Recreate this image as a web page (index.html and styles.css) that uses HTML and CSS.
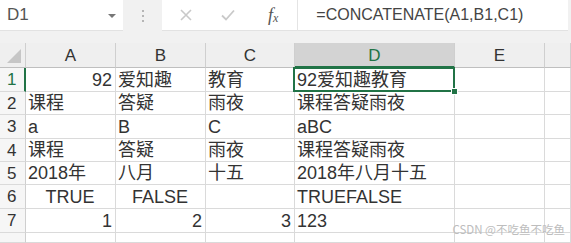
FILE: index.html
```html
<!doctype html>
<html>
  <head>
    <meta charset="utf-8" />
    <title>CONCATENATE</title>
    <link rel="stylesheet" href="styles.css">
  </head>
  <body>
    <div class="toolbar">
      <div class="namebox">
        <span class="name">D1</span>
        <span class="arrow"></span>
      </div>
      <div class="grip"><i></i><i></i><i></i></div>
      <div class="formula">
        <svg class="btn cancel" width="16" height="16" viewBox="0 0 16 16"><path d="M3 3 L13 13 M13 3 L3 13" stroke="#c9c9c9" stroke-width="1.6" fill="none"/></svg>
        <svg class="btn enter" width="16" height="16" viewBox="0 0 16 16"><path d="M2 8.5 L6 12.5 L14 3.5" stroke="#c9c9c9" stroke-width="1.8" fill="none"/></svg>
        <span class="fx">f<sub>x</sub></span>
        <span class="divider"></span>
        <span class="text">=CONCATENATE(A1,B1,C1)</span>
      </div>
    </div>

    <div class="sheet">
      <div class="corner"><span class="tri"></span></div>
      <div class="colhead">A</div>
      <div class="colhead">B</div>
      <div class="colhead">C</div>
      <div class="colhead active">D</div>
      <div class="colhead">E</div>
      <div class="colhead"></div>

      <div class="rowhead active">1</div>
      <div class="cell num">92</div>
      <div class="cell">爱知趣</div>
      <div class="cell">教育</div>
      <div class="cell selected">92爱知趣教育<span class="handle"></span></div>
      <div class="cell"></div>
      <div class="cell"></div>

      <div class="rowhead">2</div>
      <div class="cell">课程</div>
      <div class="cell">答疑</div>
      <div class="cell">雨夜</div>
      <div class="cell">课程答疑雨夜</div>
      <div class="cell"></div>
      <div class="cell"></div>

      <div class="rowhead">3</div>
      <div class="cell">a</div>
      <div class="cell">B</div>
      <div class="cell">C</div>
      <div class="cell">aBC</div>
      <div class="cell"></div>
      <div class="cell"></div>

      <div class="rowhead">4</div>
      <div class="cell">课程</div>
      <div class="cell">答疑</div>
      <div class="cell">雨夜</div>
      <div class="cell">课程答疑雨夜</div>
      <div class="cell"></div>
      <div class="cell"></div>

      <div class="rowhead">5</div>
      <div class="cell">2018年</div>
      <div class="cell">八月</div>
      <div class="cell">十五</div>
      <div class="cell">2018年八月十五</div>
      <div class="cell"></div>
      <div class="cell"></div>

      <div class="rowhead">6</div>
      <div class="cell bool">TRUE</div>
      <div class="cell bool">FALSE</div>
      <div class="cell"></div>
      <div class="cell">TRUEFALSE</div>
      <div class="cell"></div>
      <div class="cell"></div>

      <div class="rowhead">7</div>
      <div class="cell num">1</div>
      <div class="cell num">2</div>
      <div class="cell num">3</div>
      <div class="cell">123</div>
      <div class="cell"></div>
      <div class="cell"></div>

      <div class="rowhead"></div>
      <div class="cell"></div>
      <div class="cell"></div>
      <div class="cell"></div>
      <div class="cell"></div>
      <div class="cell"></div>
      <div class="cell"></div>
    </div>

    <div class="watermark">CSDN @不吃鱼不吃鱼</div>
  </body>
</html>
```

FILE: styles.css
```css
html,
body {
  margin: 0;
  width: 571px;
  height: 243px;
  overflow: hidden;
  background: #f1f1f1;
  color: #333;
  font-family: 'Liberation Sans', 'Noto Sans CJK SC', sans-serif;
}

body {
  position: relative;
}

/* formula bar */
.toolbar {
  display: flex;
  height: 31px;
  margin-bottom: 12px;
}

.namebox {
  width: 123px;
  background: #fff;
  display: flex;
  align-items: center;
  justify-content: space-between;
  padding: 0 7px 0 7px;
  box-sizing: border-box;
  border-bottom: 1px solid #e2e2e2;
}

.namebox .name {
  font-size: 17px;
  color: #555;
}

.namebox .arrow {
  width: 0;
  height: 0;
  border-left: 4px solid transparent;
  border-right: 4px solid transparent;
  border-top: 4px solid #777;
  margin-top: 1px;
}

.grip {
  width: 39px;
  display: flex;
  flex-direction: column;
  align-items: center;
  justify-content: center;
  gap: 3px;
}

.grip i {
  width: 2px;
  height: 2px;
  background: #b5b5b5;
}

.formula {
  width: 406px;
  background: #fff;
  display: flex;
  align-items: center;
  border-bottom: 1px solid #e2e2e2;
  box-sizing: border-box;
}

.formula .cancel {
  margin-left: 16px;
}

.formula .enter {
  margin-left: 26px;
}

.formula .fx {
  font-family: 'Liberation Serif', serif;
  font-style: italic;
  font-size: 18px;
  color: #555;
  margin-left: 32px;
}

.formula .fx sub {
  font-size: 12px;
  vertical-align: -1px;
}

.formula .divider {
  width: 1px;
  height: 31px;
  background: #e4e4e4;
  margin-left: 19px;
}

.formula .text {
  margin-left: 18px;
  font-size: 16px;
  color: #444;
}

/* sheet grid */
.sheet {
  display: grid;
  grid-template-columns: 26px 90px 90px 89px 160px 90px 1fr;
  grid-template-rows: 25px 24px 23px 24px 23px 23px 24px 24px 1fr;
  background: #fff;
  height: 200px;
  font-size: 18px;
}

.sheet > div {
  box-sizing: border-box;
  border-right: 1px solid #dadada;
  border-bottom: 1px solid #dadada;
  white-space: nowrap;
  overflow: visible;
}

.corner {
  background: #efefef;
  position: relative;
  border-right-color: #cfcfcf !important;
  border-bottom-color: #bfbfbf !important;
}

.corner .tri {
  position: absolute;
  right: 4px;
  bottom: 4px;
  width: 0;
  height: 0;
  border-left: 14px solid transparent;
  border-bottom: 14px solid #c6c6c6;
}

.colhead {
  background: #efefef;
  border-right-color: #cfcfcf !important;
  border-bottom-color: #bfbfbf !important;
  text-align: center;
  font-size: 17px;
  line-height: 26px;
  color: #333;
}

.colhead.active {
  background: #d3d3d3;
  color: #217346;
  border-bottom: 2px solid #217346 !important;
}

.rowhead {
  background: #f6f6f6;
  border-right-color: #cfcfcf !important;
  font-size: 17px;
  padding-left: 7px;
  line-height: 23px;
  color: #333;
}

.rowhead.active {
  color: #217346;
  border-right: 2px solid #217346 !important;
}

.cell {
  display: flex;
  align-items: flex-end;
  padding: 0 3px 0 2px;
  line-height: 21px;
  color: #333;
}

.cell.num {
  justify-content: flex-end;
}

.cell.bool {
  justify-content: center;
}

.cell.selected {
  position: relative;
}

.cell.selected::after {
  content: '';
  position: absolute;
  left: -2px;
  top: -1px;
  right: -1px;
  bottom: -1px;
  border: 2px solid #217346;
}

.cell.selected .handle {
  position: absolute;
  right: -4px;
  bottom: -4px;
  width: 5px;
  height: 5px;
  background: #217346;
  border: 1px solid #fff;
  z-index: 1;
}

.watermark {
  position: absolute;
  right: 6px;
  bottom: 6px;
  font-size: 11.5px;
  color: #bdbdbd;
  font-family: 'Noto Sans CJK SC', sans-serif;
}
```
